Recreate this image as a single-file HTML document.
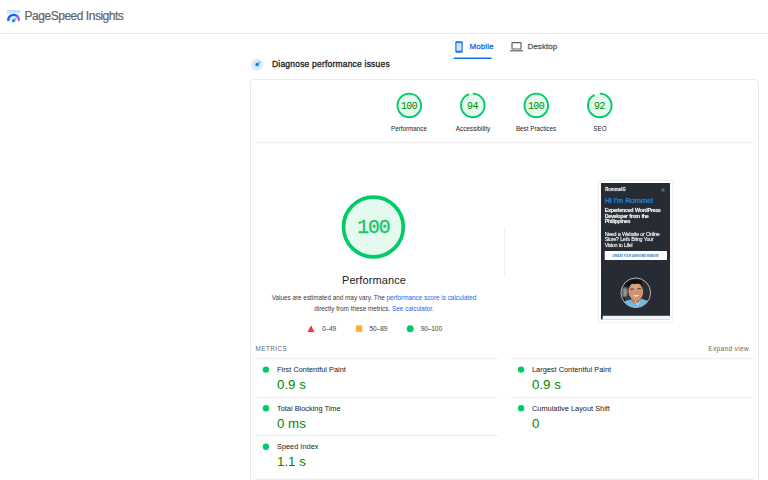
<!DOCTYPE html>
<html><head><meta charset="utf-8">
<style>
*{box-sizing:border-box;margin:0;padding:0}
html,body{width:768px;height:480px;overflow:hidden;background:#fff;font-family:"Liberation Sans",sans-serif;color:#212121}
.abs{position:absolute}
#hdr{position:absolute;left:0;top:0;width:768px;height:34px;border-bottom:1px solid #e6e6e6}
#hdr .t{position:absolute;left:24.6px;top:8.7px;font-size:12px;line-height:14px;color:#5f6368;white-space:nowrap;letter-spacing:-0.48px;-webkit-text-stroke:0.2px #5f6368}
#tabs{position:absolute;top:34px;left:0;width:768px;height:30px}
.tab{position:absolute;font-size:8px;white-space:nowrap}
#card{position:absolute;left:250px;top:79px;width:508.5px;height:420px;border:1px solid #e8eaed;border-radius:4px}
.glabel{position:absolute;font-size:6.3px;color:#212121;text-align:center;width:80px;top:125px}
.lg{top:324.6px;font-size:6.6px;letter-spacing:-0.15px;color:#424242;white-space:nowrap}
.sep{position:absolute;height:1px;background:#eeeeee}
.mname{position:absolute;font-size:7.38px;color:#212121;white-space:nowrap}
.mval{position:absolute;font-size:13.3px;margin-top:0.2px;color:#080;white-space:nowrap}
</style></head><body>
<div id="hdr">
<svg class="abs" style="left:6px;top:9px" width="16" height="16" viewBox="0 0 16 16">
<rect x="1" y="0.9" width="13" height="10.4" rx="0.7" fill="#e6f0ff"/>
<path d="M1 3.5 V1.6 Q1 0.9 1.7 0.9 H13.3 Q14 0.9 14 1.6 V3.5 Z" fill="#c2dcff"/>
<circle cx="2.3" cy="2.2" r="0.45" fill="#eef5ff"/><circle cx="4.3" cy="2.2" r="0.45" fill="#eef5ff"/>
<path d="M2.2 11.1 A5.4 5.4 0 0 1 11.42 7.48" fill="none" stroke="#0f62fe" stroke-width="2.3" stroke-linecap="round"/>
<path d="M11.42 7.48 A5.4 5.4 0 0 1 13 11.1" fill="none" stroke="#b455f5" stroke-width="2.3" stroke-linecap="round"/>
<path d="M6.3 10.4 L11 8.1 L8.9 12.6 Z" fill="#4cc6fd"/>
<circle cx="7.6" cy="11.7" r="1.9" fill="#4cc6fd"/>
<circle cx="7.5" cy="11.8" r="0.95" fill="#0b5cff"/>
</svg>
<div class="t">PageSpeed Insights</div>
</div>

<div id="tabs">
<svg class="abs" style="left:455px;top:7px" width="8" height="12" viewBox="0 0 8 12"><rect x="0.3" y="0.3" width="7.4" height="11.4" rx="1.2" fill="#1a73e8"/><rect x="1.5" y="2.1" width="5" height="7.6" fill="#d2e3fc"/></svg>
<div class="tab" style="left:469.5px;top:7.5px;color:#1a73e8;font-size:8px;-webkit-text-stroke:0.3px #1a73e8;letter-spacing:0.1px">Mobile</div>
<svg class="abs" style="left:510px;top:8px" width="13" height="10" viewBox="0 0 13 10"><rect x="2" y="0.6" width="9" height="6.4" rx="0.6" fill="#fff" stroke="#5f6368" stroke-width="1.2"/><rect x="0" y="8.2" width="13" height="1.2" fill="#5f6368"/></svg>
<div class="tab" style="left:527.5px;top:7.5px;color:#5f6368;font-size:8px;-webkit-text-stroke:0.3px #5f6368;letter-spacing:0.05px">Desktop</div>
</div>

<svg class="abs" style="left:250px;top:57px" width="15" height="15" viewBox="0 0 15 15">
<circle cx="7.2" cy="7.5" r="6.2" fill="#e3f0ff"/>
<circle cx="7.2" cy="7.5" r="4.2" fill="#cde4ff"/>
<path d="M6.2 6.6 L11 3.7 L8.2 8.5 Z" fill="#55bdfb"/>
<circle cx="7.1" cy="7.6" r="1.6" fill="#1a73f0"/>
</svg>
<div class="abs" style="left:272px;top:59.2px;font-size:8.5px;color:#202124;white-space:nowrap;letter-spacing:0.2px;-webkit-text-stroke:0.3px #202124">Diagnose performance issues</div>

<div id="card"></div>

<!-- gauges -->
<svg class="abs" style="left:380px;top:85px" width="260" height="40" viewBox="0 0 260 40">
<g font-family="Liberation Mono, monospace" font-size="10" text-anchor="middle" fill="#080" letter-spacing="-0.6">
<circle cx="29.3" cy="20.4" r="11.8" fill="#e5faef" stroke="#0c6" stroke-width="1.9"/>
<text x="29.0" y="24">100</text>
<circle cx="92.8" cy="20.4" r="11.8" fill="#e5faef"/>
<circle cx="92.8" cy="20.4" r="11.8" fill="none" stroke="#0c6" stroke-width="1.9" stroke-dasharray="69.7 74.2" transform="rotate(-90 92.8 20.4)"/>
<text x="92.5" y="24">94</text>
<circle cx="156.3" cy="20.4" r="11.8" fill="#e5faef" stroke="#0c6" stroke-width="1.9"/>
<text x="156" y="24">100</text>
<circle cx="219.8" cy="20.4" r="11.8" fill="#e5faef"/>
<circle cx="219.8" cy="20.4" r="11.8" fill="none" stroke="#0c6" stroke-width="1.9" stroke-dasharray="68.2 74.2" transform="rotate(-90 219.8 20.4)"/>
<text x="219.5" y="24">92</text>
</g>
</svg>
<div class="glabel" style="left:369px">Performance</div>
<div class="glabel" style="left:433px">Accessibility</div>
<div class="glabel" style="left:496px">Best Practices</div>
<div class="glabel" style="left:560px">SEO</div>
<div class="sep" style="left:255.5px;top:142px;width:498.5px"></div>

<!-- big gauge -->
<svg class="abs" style="left:335px;top:190px" width="80" height="80" viewBox="0 0 80 80">
<circle cx="38.4" cy="37" r="29.9" fill="#e5faef" stroke="#0c6" stroke-width="3.7"/>
<text x="38.4" y="42.8" font-family="Liberation Mono, monospace" font-size="19.8" letter-spacing="-1.18" text-anchor="middle" fill="#14c768" stroke="#14c768" stroke-width="0.35">100</text>
</svg>
<div class="abs" style="left:251px;top:273.5px;width:246px;text-align:center;font-size:11px;letter-spacing:0.1px;color:#212121">Performance</div>
<div class="abs" style="left:251px;top:293px;width:246px;text-align:center;font-size:6.36px;line-height:10.7px;color:#3c3c3c">Values are estimated and may vary. The <span style="color:#1a66ee">performance score is calculated</span><br>directly from these metrics. <span style="color:#1a66ee">See calculator.</span></div>
<div class="abs lg" style="left:322px">0–49</div>
<div class="abs lg" style="left:369.6px">50–89</div>
<div class="abs lg" style="left:420.8px">90–100</div>
<div class="abs" style="left:504px;top:226.5px;width:1px;height:50.5px;background:#f0f0f0"></div>

<!-- screenshot -->
<div class="abs" style="left:598px;top:180px;width:74.6px;height:142.6px;border:1px solid #f0f0f0;border-radius:2px;background:#fff"></div>
<div class="abs" style="left:599px;top:181px;width:73px;height:140.4px;opacity:0.999"><svg class="abs" style="left:0;top:0" width="73" height="140.4" viewBox="-2 -2 73 140.4" font-family="Liberation Sans, sans-serif">
<defs><clipPath id="av"><circle cx="19.8" cy="20.8" r="14.6"/></clipPath><filter id="bl" x="-10%" y="-10%" width="120%" height="120%"><feGaussianBlur stdDeviation="0.8"/></filter></defs>
<rect x="0" y="0" width="69" height="136.2" fill="#272c34"/>
<g><g transform="scale(0.92 1)" stroke-width="0.45" stroke-opacity="0.3">
<text x="4.57" y="8.4" textLength="22.39" lengthAdjust="spacing" font-size="4.5" font-weight="bold" fill="#fff" stroke="#fff">RommelG</text>
<text x="4.02" y="20" textLength="52.50" lengthAdjust="spacing" font-size="8.1" font-weight="bold" fill="#2280d2" stroke="#2280d2" word-spacing="0.4">Hi I'm Rommel</text>
<g font-size="5.9" font-weight="bold" fill="#fff" stroke="#fff" word-spacing="0.5">
<text x="4.02" y="29.1" textLength="61.09" lengthAdjust="spacing">Experienced WordPress</text>
<text x="4.02" y="34.65" textLength="47.93" lengthAdjust="spacing">Developer from the</text>
<text x="4.02" y="40.2" textLength="28.04" lengthAdjust="spacing">Philippines</text>
</g>
<g font-size="5.9" fill="#fff" stroke="#fff" word-spacing="0.5">
<text x="4.02" y="53" textLength="59.89" lengthAdjust="spacing">Need a Website or Online</text>
<text x="4.02" y="58.5" textLength="53.15" lengthAdjust="spacing">Store? Let's Bring Your</text>
<text x="4.02" y="64" textLength="30.54" lengthAdjust="spacing">Vision to Life!</text>
</g>
</g></g>
<g fill="#aab0b6"><rect x="60.6" y="5.7" width="2.8" height="0.5"/><rect x="60.6" y="6.7" width="2.8" height="0.5"/><rect x="60.6" y="7.7" width="2.8" height="0.5"/></g>
<rect x="3.7" y="68.05" width="62.3" height="8.95" rx="0.7" fill="#fff"/>
<text x="11.2" y="73.7" font-size="2.65" font-weight="bold" fill="#2b79bd" textLength="46.9" lengthAdjust="spacingAndGlyphs">CREATE YOUR AWESOME WEBSITE</text>
<g transform="translate(15 89)">
<g clip-path="url(#av)"><g>
<rect x="0" y="0" width="40" height="40" fill="#15171b"/>
<rect x="26" y="8" width="9" height="22" fill="#2b2f33"/>
<rect x="6.4" y="15.5" width="5.2" height="9.5" rx="1.5" fill="#9a9b97" filter="url(#bl)"/>
<rect x="9" y="25" width="5" height="6" fill="#3a3c3e"/>
<path d="M3 40 L5 33 Q9 28.6 14.5 27.6 L25.5 26.8 Q31 27.6 35 32 L38 40 Z" fill="#6bbbe8"/>
<path d="M16 25 L24 25 L25.5 28 Q22 31.5 19.5 31.5 Q16.5 31 14.8 28.6 Z" fill="#b47c5b"/>
<ellipse cx="19.8" cy="19.6" rx="7.4" ry="9.2" fill="#cd9570" transform="rotate(-6 19.8 19.8)"/>
<ellipse cx="19.6" cy="14.6" rx="4" ry="1.8" fill="#dcaa88" filter="url(#bl)"/>
<ellipse cx="16.2" cy="22" rx="2" ry="1.6" fill="#d48a6c" filter="url(#bl)"/>
<ellipse cx="23.6" cy="21.6" rx="2" ry="1.6" fill="#d48a6c" filter="url(#bl)"/>
<path d="M12.4 16.5 Q11.8 8.6 19 8 Q27 7.6 27.6 16.4 Q27 12.2 24.5 11.6 Q20 12.2 15 11.8 Q13 13 12.4 16.5 Z" fill="#0e0f11"/>
<path d="M14.4 17.3 L17.6 17" stroke="#3a241a" stroke-width="0.9"/>
<path d="M21.4 16.8 L24.8 16.6" stroke="#3a241a" stroke-width="0.9"/>
<path d="M16.8 23 Q20 26.8 23.4 22.6 Q20 23.8 16.8 23 Z" fill="#f4ece6"/>
<path d="M19 29 L21.5 33 L24 29.5" stroke="#e8f4fb" stroke-width="0.8" fill="none"/>
</g></g>
<circle cx="19.8" cy="20.8" r="14.8" fill="none" stroke="#c9c9c9" stroke-width="0.9"/>
</g>
<rect x="0" y="132.8" width="69" height="3.4" fill="#f2f5f8"/>
<rect x="0" y="130" width="1.7" height="6.2" fill="#272c34"/>
</svg></div>

<!-- metrics -->
<div class="abs" style="left:255.6px;top:344.6px;font-size:6.3px;color:#666;letter-spacing:0.45px">METRICS</div>
<div class="abs" style="left:689px;top:344.8px;width:60px;text-align:right;font-size:6.5px;color:#666;letter-spacing:0.35px;white-space:nowrap">Expand view</div>

<div class="sep" style="left:255.5px;top:358px;width:242px"></div>
<div class="sep" style="left:255.5px;top:397px;width:242px"></div>
<div class="sep" style="left:255.5px;top:435px;width:242px"></div>
<div class="sep" style="left:511px;top:358px;width:242.5px"></div>
<div class="sep" style="left:511px;top:397px;width:242.5px"></div>

<div class="mname" style="left:277px;top:365px">First Contentful Paint</div>
<div class="mval" style="left:277px;top:377px">0.9 s</div>
<div class="mname" style="left:277px;top:404px">Total Blocking Time</div>
<div class="mval" style="left:277px;top:416px">0 ms</div>
<div class="mname" style="left:277px;top:442px">Speed Index</div>
<div class="mval" style="left:277px;top:454px">1.1 s</div>

<div class="mname" style="left:532px;top:365px">Largest Contentful Paint</div>
<div class="mval" style="left:532px;top:377px">0.9 s</div>
<div class="mname" style="left:532px;top:404px">Cumulative Layout Shift</div>
<div class="mval" style="left:532px;top:416px">0</div>
<svg class="abs" style="left:0;top:0" width="768" height="480" viewBox="0 0 768 480">
<path d="M311 325.2 L314.4 332 L307.6 332 Z" fill="#f33"/><rect x="356" y="325.4" width="6.3" height="6.4" fill="#fa3"/><circle cx="410.2" cy="328.7" r="3.5" fill="#0c6"/>
<rect x="453.4" y="57.4" width="38.4" height="1.7" rx="0.8" fill="#1a73e8"/>
<rect x="255.4" y="478.6" width="498.4" height="1.4" fill="#eeeeee"/>
<g fill="#0c6">
<circle cx="265.9" cy="369.6" r="3.2"/><circle cx="265.9" cy="408.3" r="3.2"/><circle cx="265.9" cy="446.7" r="3.2"/>
<circle cx="521.1" cy="369.6" r="3.2"/><circle cx="521.1" cy="408.3" r="3.2"/>
</g></svg>
</body></html>
